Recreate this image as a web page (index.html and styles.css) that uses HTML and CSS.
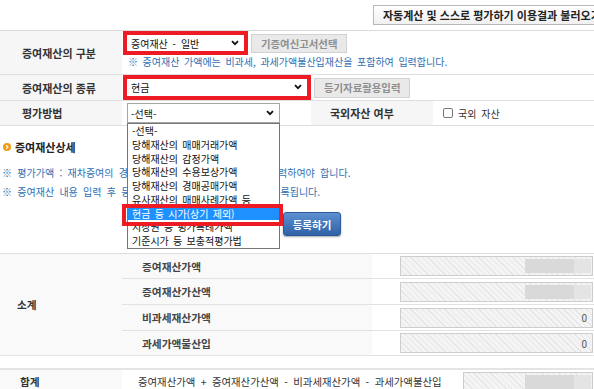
FILE: index.html
```html
<!DOCTYPE html>
<html lang="ko">
<head>
    <meta charset="UTF-8">
    <meta name="viewport" content="width=device-width, initial-scale=1.0">
    <title>증여재산 입력</title>
    <link rel="stylesheet" href="styles.css">
</head>
<body>

    <div class="topbar">
        <button type="button" class="btn-load">자동계산 및 스스로 평가하기 이용결과 불러오기</button>
    </div>

    <table class="form-table">
        <colgroup>
            <col class="col-th"><col class="col-sel"><col class="col-th2"><col class="col-rest">
        </colgroup>
        <tr class="row-kind">
            <th>증여재산의 구분</th>
            <td colspan="3">
                <div class="field-line">
                    <div class="select marked sel-kind">
                        <span>증여재산 - 일반</span>
                        <svg class="chev" width="8" height="6" viewBox="0 0 8 6"><path d="M1 1.2l3 3 3-3" fill="none" stroke="#111" stroke-width="1.8"/></svg>
                    </div>
                    <button type="button" class="btn-gray">기증여신고서선택</button>
                </div>
                <p class="note">※ 증여재산 가액에는 비과세, 과세가액불산입재산을 포함하여 입력합니다.</p>
            </td>
        </tr>
        <tr class="row-type">
            <th>증여재산의 종류</th>
            <td colspan="3">
                <div class="field-line">
                    <div class="select marked sel-type">
                        <span>현금</span>
                        <svg class="chev" width="8" height="6" viewBox="0 0 8 6"><path d="M1 1.2l3 3 3-3" fill="none" stroke="#111" stroke-width="1.8"/></svg>
                    </div>
                    <button type="button" class="btn-gray">등기자료활용입력</button>
                </div>
            </td>
        </tr>
        <tr class="row-method">
            <th>평가방법</th>
            <td>
                <div class="select-wrap">
                    <div class="select sel-method">
                        <span>-선택-</span>
                        <svg class="chev" width="8" height="6" viewBox="0 0 8 6"><path d="M1 1.2l3 3 3-3" fill="none" stroke="#111" stroke-width="1.8"/></svg>
                    </div>
                    <ul class="options">
                        <li>-선택-</li>
                        <li>당해재산의 매매거래가액</li>
                        <li>당해재산의 감정가액</li>
                        <li>당해재산의 수용보상가액</li>
                        <li>당해재산의 경매공매가액</li>
                        <li>유사재산의 매매사례가액 등</li>
                        <li class="active">현금 등 시가(상기 제외)</li>
                        <li>지상권 등 평가특례가액</li>
                        <li>기준시가 등 보충적평가법</li>
                        <li class="mark-box"></li>
                    </ul>
                </div>
            </td>
            <th class="th-mid">국외자산 여부</th>
            <td>
                <label class="check"><span class="box"></span>국외 자산</label>
            </td>
        </tr>
    </table>

    <div class="detail">
        <h3 class="sec-title">
            <svg width="8" height="8" viewBox="0 0 8 8"><circle cx="4" cy="4" r="4" fill="#f29a0e"/><path d="M3.1 2.2l1.8 1.8-1.8 1.8" fill="none" stroke="#fff" stroke-width="1.2"/></svg>
            증여재산상세
        </h3>
        <p class="note">※ 평가가액 : 재차증여의 경우에 증여일 현재 평가가액으로 입력하여야 합니다.</p>
        <p class="note">※ 증여재산 내용 입력 후 등록하기 버튼을 클릭하면 목록에 등록됩니다.</p>
        <div class="btn-row">
            <button type="button" class="btn-blue">등록하기</button>
        </div>
    </div>

    <table class="sum-table">
        <colgroup>
            <col class="col-th"><col class="col-label"><col class="col-val">
        </colgroup>
        <tr class="r1">
            <th rowspan="4" class="th-group">소계</th>
            <th class="sub">증여재산가액</th>
            <td><div class="val masked"><span class="m1"></span><span class="m2"></span></div></td>
        </tr>
        <tr class="r2">
            <th class="sub">증여재산가산액</th>
            <td><div class="val masked"><span class="m1"></span><span class="m2"></span></div></td>
        </tr>
        <tr class="r3">
            <th class="sub">비과세재산가액</th>
            <td><div class="val">0</div></td>
        </tr>
        <tr class="r4">
            <th class="sub">과세가액불산입</th>
            <td><div class="val">0</div></td>
        </tr>
    </table>

    <table class="total-table">
        <colgroup>
            <col class="col-th"><col class="col-formula"><col class="col-tval">
        </colgroup>
        <tr>
            <th class="th-group">합계</th>
            <td class="formula">증여재산가액 + 증여재산가산액 - 비과세재산가액 - 과세가액불산입</td>
            <td><div class="val masked total"><span class="m1"></span><span class="m2"></span></div></td>
        </tr>
    </table>

</body>
</html>
```

FILE: styles.css
```css
* {
    box-sizing: border-box;
}
html, body {
    margin: 0;
    height: 389px;
    overflow: hidden;
}
body {
    width: 594px;
    font-family: "Noto Sans CJK KR", "Noto Sans", sans-serif;
    font-size: 10px;
    color: #333;
    background: #fff;
}
button {
    font-family: inherit;
    cursor: pointer;
}

/* top bar */
.topbar {
    height: 30px;
    padding: 5px 0 0 373px;
    white-space: nowrap;
    overflow: hidden;
}
.btn-load {
    height: 20px;
    padding: 0 9px;
    border: 1px solid #b8b8b8;
    background: linear-gradient(#fff, #f0f0f0);
    font-size: 11px;
    font-weight: bold;
    color: #222;
    white-space: nowrap;
}

/* form table */
.form-table, .sum-table, .total-table {
    width: 594px;
    border-collapse: separate;
    border-spacing: 0;
    table-layout: fixed;
}
.form-table {
    border-top: 1px solid #dcdcdc;
}
.col-th { width: 122px; }
.col-sel { width: 189px; }
.col-th2 { width: 122px; }
.col-rest { width: 161px; }

.form-table th, .form-table td {
    padding: 0;
    border-bottom: 1px solid #dedede;
}
.form-table th {
    background: #f6f6f6;
    text-align: left;
    padding-left: 22px;
    font-size: 11px;
    font-weight: bold;
    color: #333;
}
.form-table td {
    padding-left: 1px;
}
.form-table .th-mid {
    padding-left: 19px;
}
.row-kind th, .row-kind td { height: 44px; }
.row-kind td {
    vertical-align: top;
    padding-top: 0;
}
.row-type th, .row-type td { height: 26px; }
.row-method th, .row-method td { height: 25px; }

.field-line {
    display: flex;
    align-items: center;
}
.select {
    display: flex;
    align-items: center;
    justify-content: space-between;
    background: #fff;
    color: #111;
    padding: 0 5px 0 4px;
    word-spacing: 2px;
}
.marked {
    border: 4px solid #ed1c24;
}
.sel-kind {
    width: 125px;
    height: 24px;
}
.sel-type {
    width: 188px;
    height: 25px;
    margin-top: -1px;
}
.btn-gray {
    height: 20px;
    margin-left: 3px;
    padding: 0 9px;
    border: 1px solid #d2d2d2;
    background: #e9e9e9;
    color: #8e8e8e;
    font-size: 10.4px;
    font-weight: bold;
}
.row-kind .btn-gray {
    height: 19px;
}
.note {
    margin: 0;
    padding-left: 5px;
    line-height: 14px;
    color: #2f6fb4;
    word-spacing: 2.5px;
}
.form-table .note {
    word-spacing: 1.8px;
}

/* open select list */
.select-wrap {
    position: relative;
    width: 153px;
    margin-left: 4px;
}
.sel-method {
    height: 20px;
    border: 1px solid #a6a6a6;
    padding-left: 3px;
}
.options {
    position: absolute;
    top: 100%;
    left: 0;
    z-index: 5;
    width: 153px;
    margin: 0;
    padding: 0;
    list-style: none;
    background: #fff;
    border: 1px solid #767676;
    word-spacing: 1.5px;
}
.options li {
    height: 13.75px;
    line-height: 13.75px;
    padding-left: 4px;
    color: #111;
    white-space: nowrap;
}
.options li.active {
    background: #1e90ff;
    color: #fff;
}
.options li.mark-box {
    position: absolute;
    left: -6px;
    top: 80px;
    width: 161px;
    height: 22px;
    border: 4px solid #ed1c24;
    padding: 0;
}

.check {
    display: flex;
    align-items: center;
    padding-left: 9px;
    color: #333;
    word-spacing: 2px;
}
.check .box {
    width: 10px;
    height: 10px;
    margin-right: 5px;
    border: 1px solid #777;
    border-radius: 2px;
    background: #fff;
}

/* detail section */
.detail {
    padding-top: 13px;
}
.sec-title {
    display: flex;
    align-items: center;
    gap: 4px;
    height: 16px;
    margin: 0;
    padding-left: 3px;
    font-size: 11px;
    font-weight: bold;
    color: #222;
}
.detail .note {
    padding-left: 2px;
    line-height: 19px;
    white-space: nowrap;
}
.sec-title + .note {
    margin-top: 8px;
}
.btn-row {
    margin-top: 11px;
    padding-left: 283px;
}
.btn-blue {
    width: 58px;
    height: 24px;
    border: 1px solid #2b5a97;
    border-radius: 3px;
    background: linear-gradient(#5c90d1, #2f62a6);
    box-shadow: 0 1px 2px rgba(0, 0, 0, .35);
    color: #fff;
    font-size: 10.5px;
    font-weight: bold;
}

/* summary */
.sum-table {
    margin-top: 17px;
    border-top: 1px solid #dedede;
}
.col-label { width: 250px; }
.col-val { width: 222px; }
.sum-table th, .sum-table td, .total-table th, .total-table td {
    padding: 0;
    border-bottom: 1px solid #e2e2e2;
}
.th-group {
    background: #f9f9f9;
    text-align: left;
    padding-left: 17px !important;
    font-size: 10.7px;
    font-weight: bold;
    color: #333;
}
.sub {
    background: #f9f9f9;
    text-align: left;
    padding-left: 20px !important;
    font-size: 10.7px;
    font-weight: bold;
    color: #444;
}
.r1 th, .r1 td { height: 25px; }
.r2 th, .r2 td, .r3 th, .r3 td { height: 26px; }
.r4 th, .r4 td { height: 25px; }
.sum-table .th-group { height: auto; }

.val {
    display: flex;
    align-items: center;
    justify-content: flex-end;
    width: 193px;
    height: 20px;
    margin-left: 28px;
    padding-right: 5px;
    border: 1px solid #cdcdcd;
    background: repeating-linear-gradient(45deg, #f4f4f4 0 3px, #e6e6e6 3px 4px);
    color: #555;
}
.val.masked {
    padding-right: 1px;
}
.val .m1 {
    width: 49px;
    height: 14px;
    background: #d9d9d9;
}
.val .m2 {
    width: 17px;
    height: 14px;
    background: #e4e4e4;
}

.total-table {
    margin-top: 12px;
    border-top: 2px solid #e4e4e4;
}
.col-formula { width: 318px; }
.col-tval { width: 154px; }
.total-table th, .total-table td {
    height: 24px;
}
.total-table .th-group {
    padding-left: 20px !important;
}
.formula {
    padding-left: 16px !important;
    font-size: 10.4px;
    word-spacing: 2.5px;
    color: #333;
    white-space: nowrap;
}
.val.total {
    width: 130px;
    margin-left: 23px;
}
```
